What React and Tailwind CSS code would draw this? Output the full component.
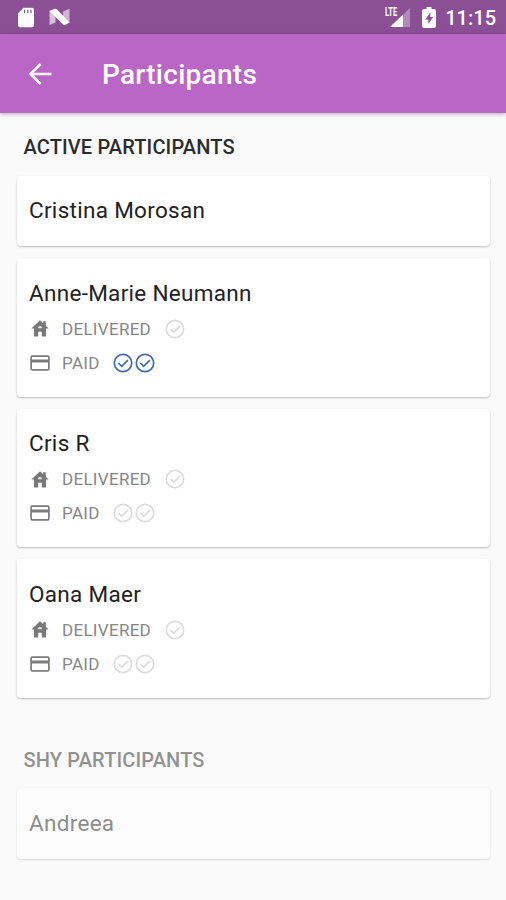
import React from 'react';

const activeParticipants = [
    { name: 'Cristina Morosan' },
    { name: 'Anne-Marie Neumann', delivered: [false], paid: [true, true] },
    { name: 'Cris R', delivered: [false], paid: [false, false] },
    { name: 'Oana Maer', delivered: [false], paid: [false, false] },
];

const shyParticipants = [{ name: 'Andreea' }];

function HouseIcon() {
    return (
        <svg className="w-[18px] h-[17px]" viewBox="0 0 18 17">
            <path d="M9 .3l3.200 3V1.300h2.600v4.500L17.600 8.600H15V16.500h-4.100v-4.700H7.100v4.700H3V8.600H.4z" fill="#787878" />
            <path d="M6.900 8.200a2.100 2.100 0 0 1 4.200 0z" fill="#e4e4e4" />
        </svg>
    );
}

function CardIcon() {
    return (
        <svg className="w-[20px] h-[16px]" viewBox="0 0 20 16" fill="none" stroke="#7b7b7b" strokeWidth="1.7">
            <rect x="1.1" y="1.1" width="17.8" height="13.8" rx="1.4" />
            <path d="M1 6H19" strokeWidth="3" />
        </svg>
    );
}

function Check({ done }) {
    return (
        <svg
            className={`w-5 h-5 ${done ? 'stroke-[#3f68b5]' : 'stroke-[#dcdcdc]'}`}
            viewBox="0 0 20 20"
            fill="none"
            strokeWidth="1.7"
        >
            <circle cx="10" cy="10" r="8.7" />
            <path d="M5.4 10l3.3 3.3 6.2-6.2" />
        </svg>
    );
}

function StatusRow({ icon, label, checks, gap }) {
    return (
        <div className="flex items-center h-[34px]">
            <div className="w-[22px] flex justify-center shrink-0">{icon}</div>
            <span className="ml-[11px] pt-[1.5px] text-[17px] tracking-[0.3px] text-[#868686]">{label}</span>
            <div className={`flex gap-[2.5px] ${gap}`}>
                {checks.map((done, i) => (
                    <Check key={i} done={done} />
                ))}
            </div>
        </div>
    );
}

function ParticipantCard({ person }) {
    return (
        <div className="bg-white rounded-[4px] shadow-[0_1px_2px_rgba(0,0,0,0.25)] pl-[12px] pt-[17.3px] pb-[18.2px]">
            <div className="h-[35px] leading-[35px] text-[22.5px] tracking-[0.3px] text-[#212121]">{person.name}</div>
            {person.delivered && (
                <div className="pt-[1.2px] mb-[-1.2px]">
                    <StatusRow icon={<HouseIcon />} label="DELIVERED" checks={person.delivered} gap="ml-[14px]" />
                    <StatusRow icon={<CardIcon />} label="PAID" checks={person.paid} gap="ml-[13px]" />
                </div>
            )}
        </div>
    );
}

function StatusBar() {
    return (
        <div className="h-[34px] bg-[#8b4f95] flex items-center text-white">
            <svg className="ml-[17px] w-[18px] h-[21px]" viewBox="0 0 18 21">
                <path d="M6.5.7H15a2 2 0 0 1 2 2v15.6a2 2 0 0 1-2 2H3a2 2 0 0 1-2-2V6.3z" fill="#fff" />
                <path d="M7.5 2.7v3.6M10.8 2.7v3.6M14 2.7v3.6" stroke="#8b4f95" strokeWidth="1.2" />
            </svg>
            <svg className="ml-[14px] w-[21px] h-[18px]" viewBox="0 0 21 18">
                <path d="M.5 2.500l6 2v10L.5 17z" fill="#d8bfdc" />
                <path d="M20.500.800v14L14 12V3.500z" fill="#cfb3d4" />
                <path d="M.5 3L5.500.8q1.500-.5 2.500.6L20.500 14.500l-4 2.300q-1.500.6-2.600-.5z" fill="#fff" />
            </svg>
            <div className="ml-auto flex items-center">
                <div className="relative w-[26px] h-[22px]">
                    <svg className="w-full h-full" viewBox="0 0 26 22">
                        <path d="M5 21L25 2v19z" fill="#b389ba" />
                        <path d="M5 21L18 8.600V21z" fill="#fff" />
                    </svg>
                    <span className="absolute left-0 top-0 text-[12px] leading-[12px] font-bold origin-left scale-x-[0.63]">LTE</span>
                </div>
                <svg className="ml-[11px] w-[14px] h-[21px]" viewBox="0 0 14 21">
                    <path d="M4.500 0h5v2H12a2 2 0 0 1 2 2v15a2 2 0 0 1-2 2H2a2 2 0 0 1-2-2V4a2 2 0 0 1 2-2h2.500z" fill="#fff" />
                    <path d="M8.500 5L3.300 12.500h3V17l4.800-7h-3z" fill="#8b4f95" />
                </svg>
                <span className="ml-[9px] mr-[10px] pt-[2px] text-[20px] leading-[22px] font-medium">11:15</span>
            </div>
        </div>
    );
}

export default function App() {
    return (
        <div className="w-[506px] h-[900px] overflow-hidden bg-[#fafafa] font-[Roboto,sans-serif]">
            <StatusBar />
            <header className="relative h-[79px] bg-[#b966c7] shadow-[0_1px_4px_rgba(0,0,0,0.3)] flex items-center text-white">
                <svg className="ml-[28px] w-6 h-6" viewBox="0 0 24 24" fill="none" stroke="#fff" strokeWidth="2.6">
                    <path d="M23.500 12H2.500M12.500 2l-10 10 10 10" />
                </svg>
                <h1 className="ml-[50px] pt-[2px] text-[28px] leading-8 font-medium tracking-[0.28px]">Participants</h1>
            </header>

            {/* Active */}
            <section className="px-[17px] pt-[20px]">
                <h2 className="pl-[6.5px] h-[28px] leading-[28px] text-[20px] font-medium tracking-[0.14px] text-[#2b2b2b]">ACTIVE PARTICIPANTS</h2>
                <div className="mt-[15px] mr-[-1px] flex flex-col gap-[12px]">
                    {activeParticipants.map((person) => (
                        <ParticipantCard key={person.name} person={person} />
                    ))}
                </div>
            </section>

            {/* Shy */}
            <section className="px-[17px] pt-[48px] opacity-50">
                <h2 className="pl-[6.5px] h-[28px] leading-[28px] text-[20px] font-medium tracking-[0.14px] text-[#2b2b2b]">SHY PARTICIPANTS</h2>
                <div className="mt-[14.5px] mr-[-1px] flex flex-col gap-[12px]">
                    {shyParticipants.map((person) => (
                        <ParticipantCard key={person.name} person={person} />
                    ))}
                </div>
            </section>
        </div>
    );
}
